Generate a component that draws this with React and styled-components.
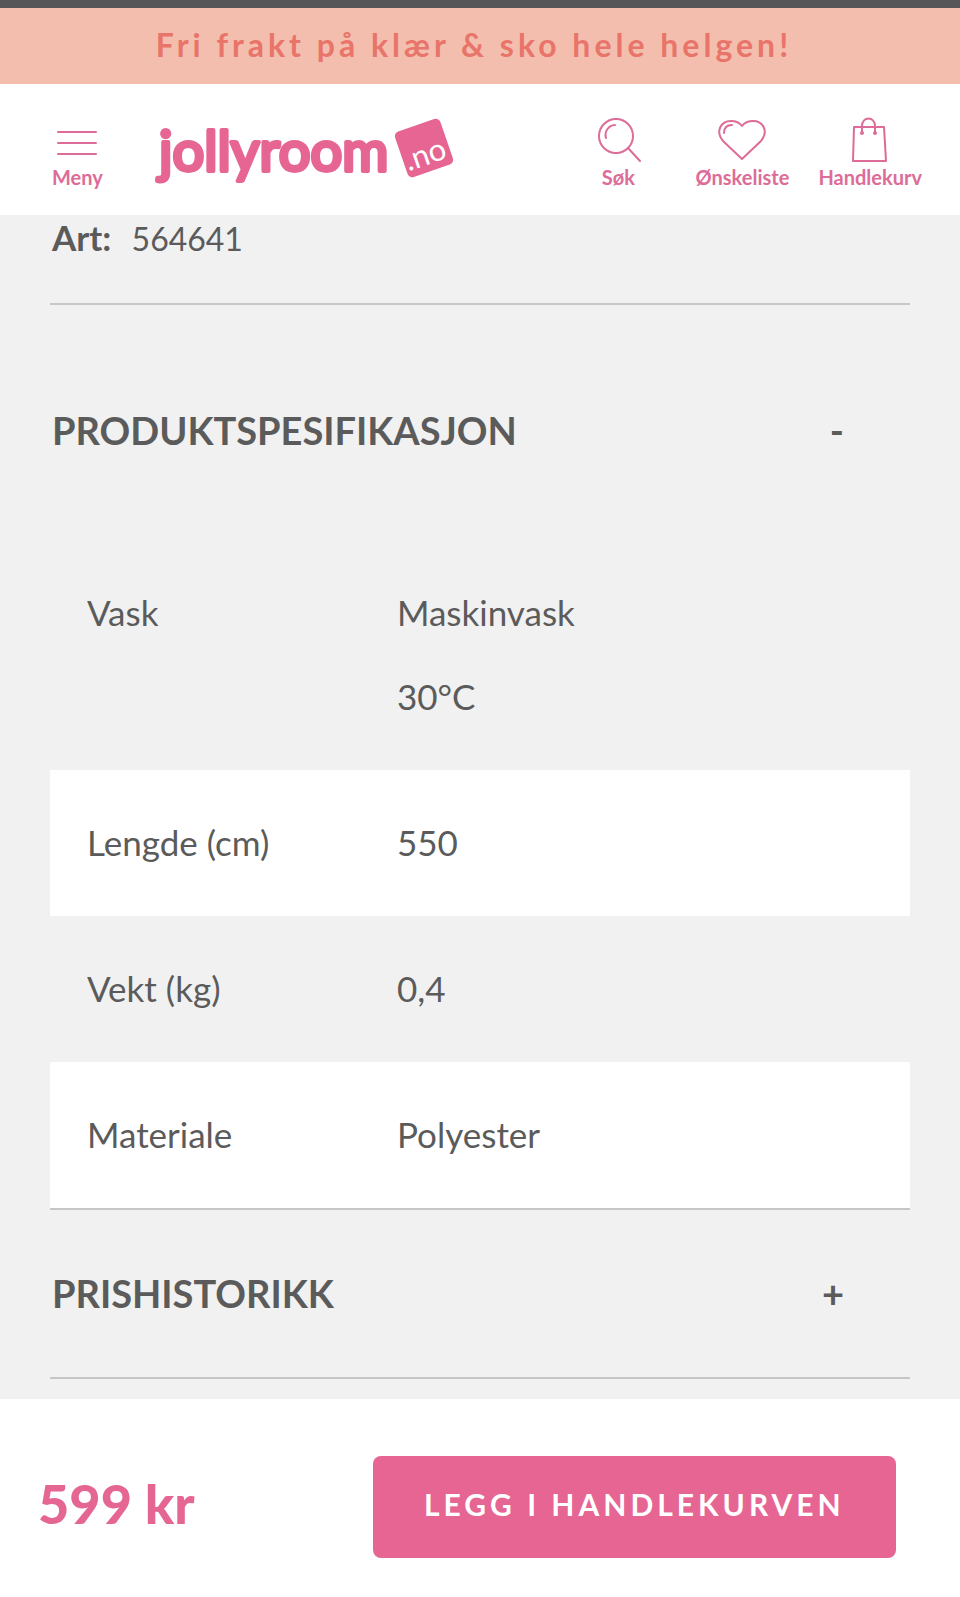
import React, { useState } from "react";
import styled, { createGlobalStyle } from 'styled-components';


const GlobalStyle = createGlobalStyle`
* {
    box-sizing: border-box;
}
body {
    margin: 0;
    background-color: #fff;
    color: #5b5b5b;
    font-family: Lato, "Liberation Sans", sans-serif;
}
`

const StatusBar = styled.div`
height: 8px;
background-color: #565557;
`

const Banner = styled.p`
margin: 0;
padding: 17px 32px 19px 20px;
background-color: #f4beae;
color: #e8746a;
font-size: 32px;
font-weight: 700;
line-height: 40px;
letter-spacing: 4px;
text-align: center;
`

const Header = styled.header`
display: flex;
align-items: flex-start;
padding: 32px 38px 26px 52px;
background-color: #fff;
`

const HeaderItem = styled.button`
display: flex;
flex-direction: column;
align-items: center;
min-width: ${props => props.$narrow ? '48px' : '96px'};
padding: 0;
border: none;
background: none;
color: #dd6c98;
font: inherit;
font-size: 20px;
font-weight: 700;
line-height: 24px;
cursor: pointer;

svg {
    display: block;
    margin-bottom: 1px;
}
`

const LogoLink = styled.a`
margin: 0 auto 0 52px;

svg {
    display: block;
    overflow: visible;
}
`

const Nav = styled.nav`
display: flex;
gap: 28px;
`

const Main = styled.main`
padding: 0 50px 20px;
background-color: #f1f1f1;
`

const Article = styled.p`
margin: 0;
padding: 1px 2px 43px;
border-bottom: 2px solid #c6c6c6;
font-size: 32px;
line-height: 42px;

strong {
    margin-right: 12px;
    font-size: 35px;
}
`

const Section = styled.section`
padding-top: ${props => props.$open ? '42px' : '0'};
border-bottom: 2px solid #c6c6c6;
`

const SectionTitle = styled.h2`
margin: 0;
`

const Toggle = styled.button`
display: flex;
align-items: center;
justify-content: space-between;
width: 100%;
height: 167px;
padding: 0 66px 2px 2px;
border: none;
background: none;
color: #5b5b5b;
font: inherit;
font-size: 38px;
font-weight: 700;
cursor: pointer;
`

const SpecTable = styled.table`
width: 100%;
margin-top: 26px;
border-collapse: collapse;
font-size: 35px;
line-height: 84px;
text-align: left;

tr:nth-child(even) {
    background-color: #fff;
}
th, td {
    padding: 30px 0 32px 3px;
    vertical-align: top;
    font-weight: 400;
}
th {
    width: 40%;
    padding-left: 37px;
}
`

const BuyBar = styled.footer`
display: flex;
align-items: center;
justify-content: space-between;
padding: 57px 64px 38px 38px;
background-color: #fff;
`

const Price = styled.strong`
padding-bottom: 8px;
color: #e56593;
font-size: 54px;
font-weight: 900;
`

const BuyButton = styled.button`
width: 61%;
height: 102px;
padding: 0 0 6px;
border: none;
border-radius: 8px;
background-color: #e66593;
color: #fff;
font: inherit;
font-size: 30px;
font-weight: 700;
letter-spacing: 4px;
cursor: pointer;
`

const specs = [
    { name: 'Vask', values: ['Maskinvask', '30°C'] },
    { name: 'Lengde (cm)', values: ['550'] },
    { name: 'Vekt (kg)', values: ['0,4'] },
    { name: 'Materiale', values: ['Polyester'] },
];


function Icon({ children, width = 48 }) {
    return (
        <svg width={width} height="48" viewBox={`0 0 ${width} 48`} fill="none" stroke="#dd6c98" strokeWidth="2" strokeLinecap="round" strokeLinejoin="round" aria-hidden="true">
            {children}
        </svg>
    )
}

function Logo() {
    return (
        <svg width="304" height="72" viewBox="0 0 304 72" role="img" aria-label="jollyroom.no">
            <text x="4" y="55" fontFamily="Lato, sans-serif" fontSize="56" fill="#e66593" stroke="#e66593" strokeWidth="4" strokeLinejoin="round">jollyroom</text>
            <g transform="translate(269 32) rotate(-19)">
                <rect x="-24" y="-24" width="48" height="48" rx="5" fill="#e66593" />
                <text x="20" y="17" textAnchor="end" fontFamily="Lato, sans-serif" fontSize="31" fill="#fff">.no</text>
            </g>
        </svg>
    )
}

function Accordion({ title, open, onToggle, children }) {
    return (
        <Section $open={open}>
            <SectionTitle>
                <Toggle aria-expanded={open} onClick={onToggle}>
                    <span>{title}</span>
                    <span>{open ? '-' : '+'}</span>
                </Toggle>
            </SectionTitle>
            {open && children}
        </Section>
    )
}

function App() {
    const [specOpen, setSpecOpen] = useState(true);
    const [historyOpen, setHistoryOpen] = useState(false);

    return (
    <>
      <GlobalStyle />
      <StatusBar />
      <Banner>Fri frakt på klær &amp; sko hele helgen!</Banner>
      <Header>
            <HeaderItem $narrow>
                <Icon>
                    <path d="M5 16H43M5 27H43M5 38H43" />
                </Icon>
                Meny
            </HeaderItem>
            <LogoLink href="/">
                <Logo />
            </LogoLink>
            <Nav>
                <HeaderItem>
                    <Icon>
                        <circle cx="22" cy="20" r="17" />
                        <path d="M12 22A10 10 0 0 1 21 9M34 32L46 45" />
                    </Icon>
                    Søk
                </HeaderItem>
                <HeaderItem>
                    <Icon>
                        <path d="M24 43L5 25C-3 15 3 5 13 5C18 5 21 6 24 10C27 6 30 5 35 5C45 5 51 15 43 25Z" />
                        <path d="M6 17C6 12 9 9 14 9" />
                    </Icon>
                    Ønskeliste
                </HeaderItem>
                <HeaderItem>
                    <Icon>
                        <path d="M8 11H38L40 45H7Z" />
                        <path d="M16 17V10C16 0 29 0 29 10V17" />
                        <circle cx="16" cy="17" r="1" />
                        <circle cx="29" cy="17" r="1" />
                    </Icon>
                    Handlekurv
                </HeaderItem>
            </Nav>
      </Header>

      <Main>
            <Article><strong>Art:</strong> 564641</Article>
            <Accordion title="PRODUKTSPESIFIKASJON" open={specOpen} onToggle={() => setSpecOpen(!specOpen)}>
                <SpecTable>
                    <tbody>
                        {specs.map(spec => (
                            <tr key={spec.name}>
                                <th scope="row">{spec.name}</th>
                                <td>
                                    {spec.values.map(value => <div key={value}>{value}</div>)}
                                </td>
                            </tr>
                        ))}
                    </tbody>
                </SpecTable>
            </Accordion>
            <Accordion title="PRISHISTORIKK" open={historyOpen} onToggle={() => setHistoryOpen(!historyOpen)} />
      </Main>

      <BuyBar>
            <Price>599 kr</Price>
            <BuyButton>LEGG I HANDLEKURVEN</BuyButton>
      </BuyBar>
    </>
    )
}

export default App;
